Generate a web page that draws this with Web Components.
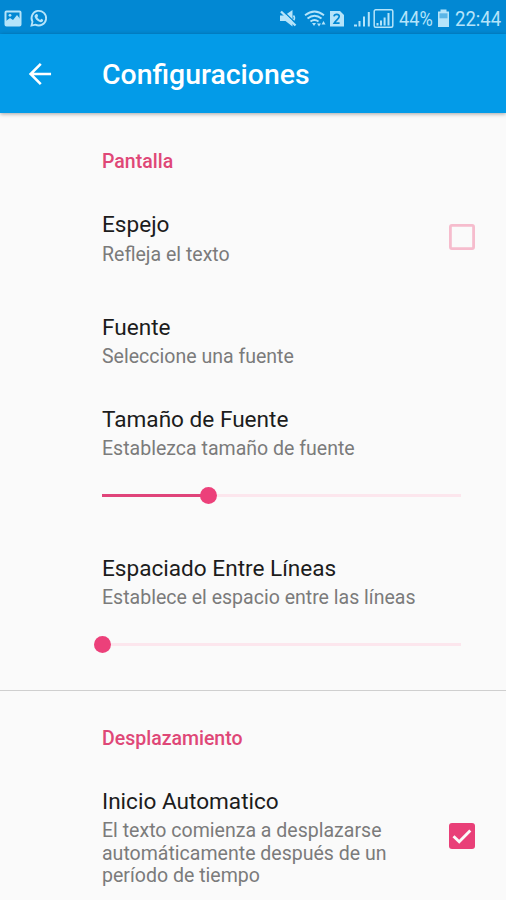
<!DOCTYPE html>
<html lang="es">
<head>
<meta charset="utf-8">
<title>Configuraciones</title>
<style>
  html, body { margin: 0; height: 100%; overflow: hidden; }
  body {
    --primary: #039be8;
    --primary-dark: #0288d3;
    --accent: #ec407a;
    --status-icon: #b5e4fa;
    background: #fafafa;
    font-family: Roboto, "Liberation Sans", sans-serif;
  }
</style>
</head>
<body>
<settings-screen></settings-screen>

<script>
class StatusBar extends HTMLElement {
  constructor() {
    super();
    this.attachShadow({ mode: 'open' });
    this.shadowRoot.innerHTML = `
      <style>
        :host {
          display: flex;
          justify-content: space-between;
          align-items: center;
          box-sizing: border-box;
          height: 34px;
          padding: 3px 5px 0 4px;
          background: var(--primary-dark);
          color: var(--status-icon);
        }
        .side { display: flex; align-items: center; }
        svg { display: block; }
        span { font-size: 19.5px; line-height: 30px; padding-top: 2px; white-space: nowrap; transform-origin: 0 50%; }
        .pct { width: 34px; transform: scaleX(.93); }
        .time { width: 46px; transform: scaleX(.95); }
      </style>
      <div class="side">
        <svg width="46" height="24" viewBox="0 0 46 24" fill="none">
          <rect x="1.5" y="4.5" width="15" height="14" rx="1" stroke="currentColor" stroke-width="2"/>
          <path d="M2 14l4-3 3 2 4-5 4 5v6H2z" fill="currentColor"/>
          <circle cx="6" cy="8.3" r="1.4" fill="currentColor"/>
          <path d="M27.5 18.6l1-3.8a7.3 7.3 0 1 1 2.9 2.8z" stroke="currentColor" stroke-width="1.8"/>
          <path d="M31.6 7.4c.7-.8 1.7-.6 2 .2l.5 1.5-.8 1.1c.7 1.3 1.6 2.1 2.9 2.7l1-1.1 1.9.9c.4 1.9-1.5 2.9-3.1 2.3-3-.9-5-3.2-5.5-5.7 0-.8.4-1.4 1.1-1.9z" fill="currentColor"/>
        </svg>
      </div>
      <div class="side">
        <svg width="120" height="24" viewBox="279 0 120 24" fill="none">
          <path d="M280 8.500h4.500l8-5.500v16.500l-7-5.500H280z" fill="currentColor"/>
          <path d="M293.500 8.500q2 2.500 0 5" stroke="currentColor" stroke-width="1.500"/>
          <path d="M282.500 3.500l14 13.500" stroke="var(--primary-dark)" stroke-width="1.400"/>
          <path d="M281 4.500l14.500 14" stroke="currentColor" stroke-width="2.400"/>
          <g stroke="currentColor" stroke-width="1.800">
            <path d="M305 8.200q9.500-7.500 19 0M307.500 11.500q7-5.500 14 0M310.500 14.500q4-3 8 0"/>
          </g>
          <path d="M312 16h4l-2 3zM317 16.500h4l-2 3zM321.500 17.500l2-3.500 2 3.500z" fill="currentColor"/>
          <path d="M330 4h10l4 4v11.500h-14z" fill="currentColor"/>
          <path d="M334 9.300c.4-2.600 5.600-2.500 5.200.3-.2 2-3.500 4-5 6.500h5.400" stroke="var(--primary-dark)" stroke-width="1.700"/>
          <path d="M354 17.500h3v2h-3zM358.500 14h2v5.500h-2zM363 9.500h2v10h-2zM367.800 5h2v14.500h-2z" fill="currentColor"/>
          <rect x="374.200" y="2.800" width="18.600" height="17.400" rx="1.500" stroke="currentColor" stroke-width="1.500"/>
          <path d="M376.500 16h2v2.500h-2zM380 13.500h2v5h-2zM383.600 10.500h2v8h-2zM387.500 6h2v12.500h-2z" fill="currentColor"/>
        </svg>
        <span class="pct">44%</span>
        <svg width="22" height="24" viewBox="0 0 22 24">
          <path d="M5 4.500h2.500v-2h6v2H16v15.500H5z" fill="currentColor"/>
          <path d="M6.500 6.300h8v5h-8z" fill="var(--primary-dark)" opacity=".5"/>
        </svg>
        <span class="time">22:44</span>
      </div>
    `;
  }
}
customElements.define('status-bar', StatusBar);

class AppToolbar extends HTMLElement {
  constructor() {
    super();
    this.attachShadow({ mode: 'open' });
    this.shadowRoot.innerHTML = `
      <style>
        :host {
          display: flex;
          align-items: center;
          height: 79px;
          padding-left: 23px;
          gap: 45px;
          background: var(--primary);
          color: #fff;
          box-shadow: 0 1px 4px rgba(0, 0, 0, .35);
        }
        h1 { margin: 2px 0 0; font-size: 28.4px; font-weight: 500; line-height: 34px; }
        svg { display: block; }
      </style>
      <svg width="34" height="34" viewBox="0 0 24 24" fill="#fff">
        <path d="M19.800 11.100H7.600l5.600-5.600-1.300-1.300-7.800 7.800 7.800 7.800 1.300-1.300-5.600-5.600h12.200z"/>
      </svg>
      <h1><slot></slot></h1>
    `;
  }
}
customElements.define('app-toolbar', AppToolbar);

class PrefCategory extends HTMLElement {
  constructor() {
    super();
    this.attachShadow({ mode: 'open' });
    this.shadowRoot.innerHTML = `
      <style>
        :host { display: block; }
        :host([divided]) { margin-top: 5px; border-top: 1px solid #cfcfcf; }
        h2 {
          margin: 0;
          padding: 37px 0 13px 102px;
          color: #df4777;
          font-size: 19.5px;
          font-weight: 500;
          line-height: 23px;
        }
        :host([divided]) h2 { padding-top: 36px; }
      </style>
      <h2>${this.getAttribute('label')}</h2>
      <slot></slot>
    `;
  }
}
customElements.define('pref-category', PrefCategory);

class PrefItem extends HTMLElement {
  constructor() {
    super();
    this.attachShadow({ mode: 'open' });
    this.shadowRoot.innerHTML = `
      <style>
        :host {
          display: flex;
          justify-content: space-between;
          align-items: center;
          box-sizing: border-box;
          min-height: 93px;
          padding: 19px 30px 18px 102px;
        }
        :host([tall]) { min-height: 108px; padding: 19px 30px 22px 102px; }
        :host([long]) { padding-top: 25px; }
        :host([stacked]) { display: block; padding-bottom: 0; height: 149px; }
        .title { color: #1c1c1c; font-size: 22.6px; line-height: 28px; }
        .summary { margin-top: 4px; max-width: 300px; color: #7b7b7b; font-size: 19.55px; line-height: 22.5px; }
        :host([tall]) .summary { margin-top: 5px; }
        :host([stacked]) .summary { max-width: none; }
      </style>
      <div>
        <div class="title">${this.getAttribute('label')}</div>
        <div class="summary">${this.getAttribute('summary')}</div>
      </div>
      <slot></slot>
    `;
  }
}
customElements.define('pref-item', PrefItem);

class PrefCheckbox extends HTMLElement {
  constructor() {
    super();
    this.attachShadow({ mode: 'open' });
    const mark = this.hasAttribute('checked')
      ? `<rect x="1" y="1" width="26" height="26" rx="3" fill="#e93f78"/>
         <path d="M5.500 14.300l5.700 5.500L22.300 8.500" fill="none" stroke="#fafafa" stroke-width="2.900"/>`
      : `<rect x="2.400" y="2.400" width="23.200" height="23.200" rx="1.500" fill="none" stroke="#f6bccd" stroke-width="2.800"/>`;
    this.shadowRoot.innerHTML = `
      <style>
        :host { display: block; flex: none; margin-bottom: 4px; }
        svg { display: block; }
      </style>
      <svg width="28" height="28" viewBox="0 0 28 28">${mark}</svg>
    `;
  }
}
customElements.define('pref-checkbox', PrefCheckbox);

class PrefSlider extends HTMLElement {
  constructor() {
    super();
    this.attachShadow({ mode: 'open' });
    this.shadowRoot.innerHTML = `
      <style>
        :host { display: flex; align-items: center; width: 359px; height: 18px; margin-top: 25.5px; }
        .fill { width: ${this.getAttribute('value')}%; height: 3px; background: #e0447a; }
        .thumb { flex: none; width: 17px; height: 17px; margin: 0 -8.5px; border-radius: 50%; background: var(--accent); z-index: 1; }
        .rest { flex: 1; height: 3px; background: #fce6ed; }
      </style>
      <div class="fill"></div>
      <div class="thumb"></div>
      <div class="rest"></div>
    `;
  }
}
customElements.define('pref-slider', PrefSlider);

class SettingsScreen extends HTMLElement {
  constructor() {
    super();
    this.attachShadow({ mode: 'open' });
    this.shadowRoot.innerHTML = `
      <style>
        :host { display: block; height: 100%; overflow: hidden; }
      </style>
      <status-bar></status-bar>
      <app-toolbar>Configuraciones</app-toolbar>
      <pref-category label="Pantalla">
        <pref-item tall label="Espejo" summary="Refleja el texto">
          <pref-checkbox></pref-checkbox>
        </pref-item>
        <pref-item label="Fuente" summary="Seleccione una fuente"></pref-item>
        <pref-item stacked label="Tamaño de Fuente" summary="Establezca tamaño de fuente">
          <pref-slider value="29.6"></pref-slider>
        </pref-item>
        <pref-item stacked label="Espaciado Entre Líneas" summary="Establece el espacio entre las líneas">
          <pref-slider value="0"></pref-slider>
        </pref-item>
      </pref-category>
      <pref-category divided label="Desplazamiento">
        <pref-item long label="Inicio Automatico" summary="El texto comienza a desplazarse automáticamente después de un período de tiempo">
          <pref-checkbox checked></pref-checkbox>
        </pref-item>
      </pref-category>
    `;
  }
}
customElements.define('settings-screen', SettingsScreen);
</script>
</body>
</html>
